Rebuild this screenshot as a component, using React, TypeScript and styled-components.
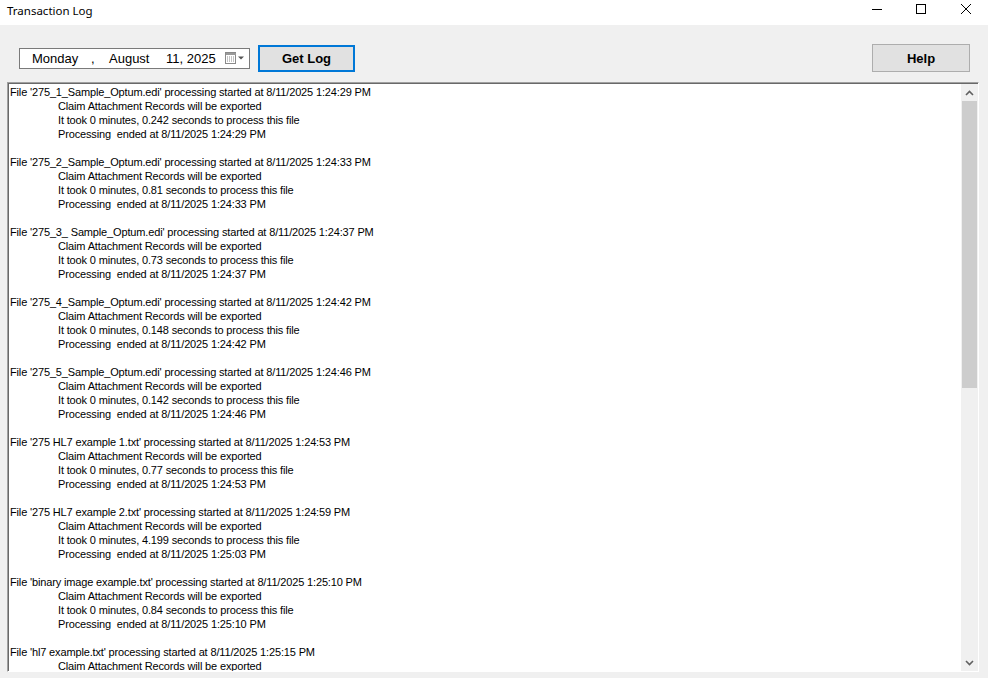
import React from 'react';
import styled, { createGlobalStyle } from 'styled-components';

type LogEntry = {
  file: string;
  started: string;
  took?: string;
  ended?: string;
};

const entries: LogEntry[] = [
  { file: '275_1_Sample_Optum.edi', started: '1:24:29 PM', took: '0.242', ended: '1:24:29 PM' },
  { file: '275_2_Sample_Optum.edi', started: '1:24:33 PM', took: '0.81', ended: '1:24:33 PM' },
  { file: '275_3_ Sample_Optum.edi', started: '1:24:37 PM', took: '0.73', ended: '1:24:37 PM' },
  { file: '275_4_Sample_Optum.edi', started: '1:24:42 PM', took: '0.148', ended: '1:24:42 PM' },
  { file: '275_5_Sample_Optum.edi', started: '1:24:46 PM', took: '0.142', ended: '1:24:46 PM' },
  { file: '275 HL7 example 1.txt', started: '1:24:53 PM', took: '0.77', ended: '1:24:53 PM' },
  { file: '275 HL7 example 2.txt', started: '1:24:59 PM', took: '4.199', ended: '1:25:03 PM' },
  { file: 'binary image example.txt', started: '1:25:10 PM', took: '0.84', ended: '1:25:10 PM' },
  { file: 'hl7 example.txt', started: '1:25:15 PM' },
];

const App: React.FC = () => {
  return (
    <>
      <GlobalStyle />
      <Window>
        <TitleBar>
          <Title>Transaction Log</Title>
          <Controls>
            <CaptionButton aria-label="Minimize">
              <svg width="10" height="10" viewBox="0 0 10 10">
                <line x1="0" y1="5.5" x2="10" y2="5.5" stroke="#000" strokeWidth="1" />
              </svg>
            </CaptionButton>
            <CaptionButton aria-label="Maximize">
              <svg width="10" height="10" viewBox="0 0 10 10">
                <rect x="0.5" y="0.5" width="9" height="9" fill="none" stroke="#000" strokeWidth="1" />
              </svg>
            </CaptionButton>
            <CaptionButton aria-label="Close">
              <svg width="10" height="10" viewBox="0 0 10 10">
                <path d="M0 0 L10 10 M10 0 L0 10" stroke="#000" strokeWidth="1" />
              </svg>
            </CaptionButton>
          </Controls>
        </TitleBar>

        <Toolbar>
          <DatePicker>
            <DatePart $width={59}>Monday</DatePart>
            <DatePart $width={18}>,</DatePart>
            <DatePart $width={57}>August</DatePart>
            <DatePart $width={58}>11, 2025</DatePart>
            <CalendarIcon />
          </DatePicker>
          <Button $primary>Get Log</Button>
          <Spacer />
          <Button>Help</Button>
        </Toolbar>

        <LogPanel>
          <LogText>
            {entries.map((e) => (
              <Block key={e.file}>
                <Line>{`File '${e.file}' processing started at 8/11/2025 ${e.started}`}</Line>
                <Line $indent>Claim Attachment Records will be exported</Line>
                {e.took && <Line $indent>{`It took 0 minutes, ${e.took} seconds to process this file`}</Line>}
                {e.ended && <Line $indent>{`Processing  ended at 8/11/2025 ${e.ended}`}</Line>}
              </Block>
            ))}
          </LogText>
          <ScrollBar>
            <ArrowButton>
              <Chevron />
            </ArrowButton>
            <Track>
              <Thumb />
            </Track>
            <ArrowButton>
              <Chevron $down />
            </ArrowButton>
          </ScrollBar>
        </LogPanel>
      </Window>
    </>
  );
};

export default App;

const CalendarIcon: React.FC = () => (
  <CalendarWrap>
    <svg width="20" height="12" viewBox="0 0 20 12">
      <rect x="0.5" y="0.5" width="10" height="11" fill="#fff" stroke="#8a8a8a" />
      <rect x="1" y="1" width="10" height="2" fill="#9a9a9a" />
      <path
        d="M2 5h1M4 5h1M6 5h1M8 5h1M2 7h1M4 7h1M6 7h1M8 7h1M2 9h1M4 9h1M6 9h1M8 9h1"
        stroke="#8a8a8a"
        strokeWidth="1"
      />
      <path d="M13 4.5 L19 4.5 L16 7.5 Z" fill="#555" />
    </svg>
  </CalendarWrap>
);

const Chevron: React.FC<{ $down?: boolean }> = ({ $down }) => (
  <svg width="9" height="6" viewBox="0 0 9 6">
    <path
      d={$down ? 'M1 1 L4.5 4.5 L8 1' : 'M1 5 L4.5 1.5 L8 5'}
      fill="none"
      stroke="#606060"
      strokeWidth="1.6"
    />
  </svg>
);

const GlobalStyle = createGlobalStyle`
  html, body {
    margin: 0;
    padding: 0;
    background: #f0f0f0;
  }
  * {
    box-sizing: border-box;
  }
`;

const Window = styled.div`
  display: flex;
  flex-direction: column;
  width: 988px;
  height: 678px;
  overflow: hidden;
  background: #f0f0f0;
  font-family: 'Liberation Sans', Arial, sans-serif;
`;

const TitleBar = styled.div`
  display: flex;
  align-items: center;
  height: 25px;
  padding-left: 7px;
  background: #fff;
`;

const Title = styled.div`
  flex: 1;
  font-family: 'Noto Sans', 'Open Sans', sans-serif;
  font-size: 11.5px;
  color: #000;
  margin-top: -4px;
`;

const Controls = styled.div`
  display: flex;
  align-self: flex-start;
`;

const CaptionButton = styled.div`
  display: flex;
  align-items: center;
  justify-content: center;
  width: 44px;
  height: 18px;

  &:last-child {
    width: 45px;
  }
`;

const Toolbar = styled.div`
  display: flex;
  align-items: center;
  padding: 19px 18px 10px 19px;
`;

const DatePicker = styled.div`
  display: flex;
  align-items: center;
  width: 231px;
  height: 21px;
  margin-right: 8px;
  padding-left: 12px;
  background: #fff;
  border: 1px solid #7a7a7a;
  font-size: 13px;
  color: #000;
`;

const DatePart = styled.span<{ $width: number }>`
  width: ${({ $width }) => $width}px;
  white-space: nowrap;
`;

const CalendarWrap = styled.div`
  display: flex;
  align-items: center;
  margin-left: 1px;
`;

const Button = styled.button<{ $primary?: boolean }>`
  width: ${({ $primary }) => ($primary ? '97px' : '98px')};
  height: ${({ $primary }) => ($primary ? '27px' : '28px')};
  padding: 0;
  background: #e1e1e1;
  border: ${({ $primary }) => ($primary ? '2px solid #0078d7' : '1px solid #adadad')};
  font-family: 'Liberation Sans', Arial, sans-serif;
  font-weight: bold;
  font-size: 13px;
  color: #000;
`;

const Spacer = styled.div`
  flex: 1;
`;

const LogPanel = styled.div`
  flex: 1;
  display: flex;
  min-height: 0;
  margin: 0 9px 6px 7px;
  background: #fff;
  border-top: 1px solid #a0a0a0;
  border-left: 1px solid #a0a0a0;
  border-right: 1px solid #fff;
  border-bottom: 1px solid #fff;
  box-shadow: inset 1px 1px 0 #696969;
  padding: 1px 0 0 1px;
`;

const LogText = styled.div`
  flex: 1;
  overflow: hidden;
  padding: 1px 0 0 1px;
  font-size: 11px;
  letter-spacing: -0.15px;
  color: #000;
`;

const Block = styled.div`
  margin-bottom: 14px;
`;

const Line = styled.div<{ $indent?: boolean }>`
  height: 14px;
  line-height: 14px;
  white-space: pre;
  padding-left: ${({ $indent }) => ($indent ? '48px' : '0')};
`;

const ScrollBar = styled.div`
  display: flex;
  flex-direction: column;
  width: 17px;
  background: #f0f0f0;
`;

const ArrowButton = styled.div`
  display: flex;
  align-items: center;
  justify-content: center;
  height: 17px;
`;

const Track = styled.div`
  flex: 1;
  padding: 0 1px;
`;

const Thumb = styled.div`
  height: 287px;
  background: #cdcdcd;
`;
